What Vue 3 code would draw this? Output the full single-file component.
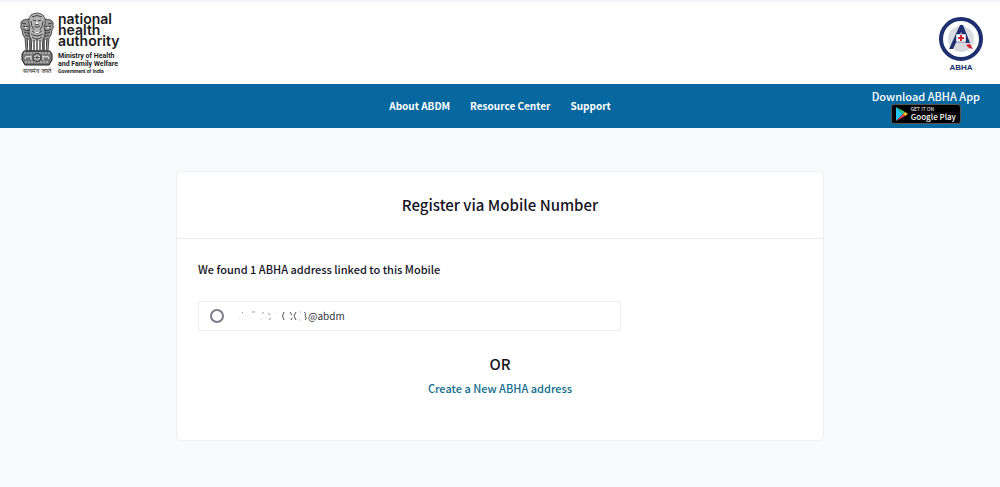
<template>
    <div class="page">
        <header class="header">
            <a class="nha" href="#">
                <span class="nha__emblem">
                    <svg class="nha__lions" viewBox="0 0 34 54" aria-hidden="true">
                        <g fill="#9a9a9a" stroke="#333" stroke-width="0.8">
                            <path d="M3 8q-3 2-2 5q-1 3 1 5q0 5 3 8l1 13h5l2-25l-4-7z" />
                            <path d="M31 8q3 2 2 5q1 3-1 5q0 5-3 8l-1 13h-5l-2-25l4-7z" />
                            <path d="M11 3q6-4 12 0q4 5 1 12q3 7-1 12l-1 12h-10l-1-12q-4-5-1-12q-3-7 1-12z" fill="#b4b4b4" />
                        </g>
                        <g fill="none" stroke="#222" stroke-width="0.8">
                            <path d="M12 5q5-3 10 0M13 8l3 1M18 9l3-1M15 12q2 2 4 0M14 14q3 3 6 0M11 9q0 5 3 9M23 9q0 5-3 9" />
                            <path d="M12 19q5 4 10 0M11 22q6 4 12 0M12 25q5 4 10 0M14 28v10M17 27v11M20 28v10" />
                            <path d="M2 11l4 1M3 14q3 2 6 0M3 17q3 3 7 1M4 20q3 2 6 1M5 23q3 2 5 1M7 26l1 12M10 26v12" />
                            <path d="M32 11l-4 1M31 14q-3 2-6 0M31 17q-3 3-7 1M30 20q-3 2-6 1M29 23q-3 2-5 1M27 26l-1 12M24 26v12" />
                        </g>
                        <g fill="#fff">
                            <path d="M16 10h2v2h-2zM15 20h4v1h-4zM15 29h1v9h-1zM18 29h1v9h-1zM8 28h1v10h-1zM12 30h1v8h-1zM21 30h1v8h-1zM25 28h1v10h-1zM5 15h2v1h-2zM27 15h2v1h-2z" />
                        </g>
                        <path d="M4 39h26l2 3v6l-3 5h-24l-3-5v-6z" fill="#777" stroke="#222" />
                        <path d="M4 41h26M5 50h24" stroke="#ddd" stroke-width="1" stroke-dasharray="2 1" />
                        <circle cx="17" cy="45.500" r="4" fill="#ddd" stroke="#222" />
                        <path d="M17 42v7M13.500 45.500h7M14.500 43l5 5M19.500 43l-5 5" stroke="#333" stroke-width="0.6" />
                        <path d="M5 47q1-4 3-2l3-1v4M29 47q-1-4-3-2l-3-1v4" fill="none" stroke="#ddd" stroke-width="1.2" />
                    </svg>
                    <span class="nha__motto">सत्यमेव जयते</span>
                </span>
                <span class="nha__text">
                    <span class="nha__name">national<br>health<br>authority</span>
                    <span class="nha__ministry">Ministry of Health<br>and Family Welfare</span>
                    <span class="nha__gov">Government of India</span>
                </span>
            </a>
            <a class="abha" href="#">
                <svg class="abha__icon" viewBox="0 0 46 46" aria-hidden="true">
                    <circle cx="23" cy="23" r="20" fill="#fff" stroke="#1d2f6f" stroke-width="4" />
                    <circle cx="23" cy="23" r="13" fill="#d9dbe0" />
                    <path d="M11 33L22 9h3l7 18h-4l-5-11l-8 17z" fill="#1d2f6f" />
                    <path d="M18 18h10v8h-10z" fill="#fff" stroke="#1d2f6f" stroke-width="0.5" />
                    <path d="M22 19h2v2h2v2h-2v2h-2v-2h-2v-2h2z" fill="#d5202f" />
                    <path d="M28 29l4-1l3 5l-4-1z" fill="#d5202f" />
                </svg>
                <span class="abha__label">ABHA</span>
            </a>
        </header>

        <nav class="nav">
            <div class="nav__links">
                <a v-for="link in links" :key="link" class="nav__link" href="#">{{ link }}</a>
            </div>
            <div class="download">
                <span class="download__title">Download ABHA App</span>
                <a class="play" href="#">
                    <svg class="play__icon" viewBox="0 0 12 14" aria-hidden="true">
                        <path d="M0 0v14l7-7z" fill="#20c4f4" />
                        <path d="M0 0l7 7l2-2z" fill="#35d07f" />
                        <path d="M0 14l7-7l2 2z" fill="#ef4256" />
                        <path d="M9 5l3 2l-3 2l-2-2z" fill="#fbc02d" />
                    </svg>
                    <span class="play__text">
                        <span class="play__small">GET IT ON</span>
                        <span class="play__big">Google Play</span>
                    </span>
                </a>
            </div>
        </nav>

        <main class="main">
            <section class="card">
                <h1 class="card__title">Register via Mobile Number</h1>
                <div class="card__body">
                    <p class="card__found">We found {{ count }} ABHA address linked to this Mobile</p>
                    <label class="address">
                        <input v-model="selected" class="address__radio" type="radio" name="address" value="abdm">
                        <span class="address__text">
                            <svg class="address__mask" viewBox="0 0 70 12" aria-hidden="true">
                                <g fill="none" stroke="#555">
                                    <path d="M46 2q-3 4 0 8M52 2l2 3M58 2l-2 4l2 4M53 10l1-2M66 2q3 1 1 4q3 2 0 4" />
                                    <path d="M4 3l1-1M14 2h3M25 2v2M31 3v2M31 10l2-2M62 2h1M61 10h1" stroke="#999" />
                                    <path d="M1 9h1M12 8h1M22 9h2M37 3h1" stroke="#ddd" />
                                </g>
                            </svg>@abdm
                        </span>
                    </label>
                    <p class="card__or">OR</p>
                    <a class="card__create" href="#">Create a New ABHA address</a>
                </div>
            </section>
        </main>
    </div>
</template>

<script setup>
import { ref } from 'vue'

const links = ['About ABDM', 'Resource Center', 'Support']
const count = ref(1)
const selected = ref(null)
</script>

<style>
body {
    background: #f8fafc;
}
</style>

<style scoped>
.page {
    font-family: "Noto Sans CJK SC", "Open Sans", sans-serif;
    color: #14141f;
}

a {
    text-decoration: none;
}

.header {
    display: flex;
    justify-content: space-between;
    align-items: flex-start;
    box-sizing: border-box;
    min-height: 84px;
    padding: 10px 16px 0 20px;
    border-top: 2px solid #f3f3fa;
    background: #fff;
}

.nha {
    display: flex;
    gap: 4px;
    color: #1c1c1c;
}

.nha__emblem {
    display: flex;
    flex-direction: column;
    align-items: center;
    width: 34px;
}

.nha__lions {
    width: 34px;
    height: 54px;
}

.nha__motto {
    font-size: 6px;
    line-height: 9px;
    white-space: nowrap;
}

.nha__text {
    display: flex;
    flex-direction: column;
    padding-top: 1px;
}

.nha__name {
    margin-bottom: 6px;
    font-family: Inter, sans-serif;
    font-size: 14px;
    font-weight: 600;
    line-height: 11px;
}

.nha__ministry {
    font-family: Roboto, sans-serif;
    font-size: 7px;
    font-weight: 700;
    line-height: 8px;
}

.nha__gov {
    font-family: Roboto, sans-serif;
    font-size: 5px;
    font-weight: 700;
    line-height: 7px;
}

.abha {
    display: flex;
    flex-direction: column;
    align-items: center;
    padding-top: 4px;
    color: #1d2f6f;
}

.abha__icon {
    width: 46px;
    height: 46px;
}

.abha__label {
    font-family: "Liberation Sans", sans-serif;
    font-size: 8px;
    font-weight: 700;
    line-height: 12px;
}

.nav {
    display: grid;
    grid-template-columns: 1fr auto 1fr;
    align-items: center;
    min-height: 44px;
    padding: 0 20px;
    background: #0768a0;
}

.nav__links {
    display: flex;
    grid-column: 2;
    gap: 20px;
}

.nav__link {
    color: #fff;
    font-size: 10px;
    font-weight: 700;
    line-height: 16px;
}

.download {
    display: flex;
    flex-direction: column;
    align-items: center;
    justify-self: end;
    color: #fff;
}

.download__title {
    font-size: 11px;
    font-weight: 500;
    line-height: 16px;
}

.play {
    display: flex;
    align-items: center;
    gap: 3px;
    box-sizing: border-box;
    height: 20px;
    padding: 0 4px;
    border: 1px solid #555;
    border-radius: 3px;
    background: #000;
    color: #fff;
}

.play__icon {
    width: 12px;
    height: 14px;
}

.play__text {
    display: flex;
    flex-direction: column;
}

.play__small {
    font-size: 5px;
    line-height: 6px;
}

.play__big {
    font-size: 8px;
    font-weight: 500;
    line-height: 10px;
}

.main {
    padding: 43px 24px;
}

.card {
    box-sizing: border-box;
    max-width: 648px;
    margin: 0 auto;
    border: 1px solid #edf0f3;
    border-radius: 6px;
    background: #fff;
}

.card__title {
    margin: 0;
    padding: 21px;
    border-bottom: 1px solid #e8eaed;
    font-size: 15px;
    font-weight: 500;
    line-height: 24px;
    text-align: center;
}

.card__body {
    display: flex;
    flex-direction: column;
    align-items: center;
    padding: 20px 21px 42px;
}

.card__found {
    align-self: stretch;
    margin: 0 0 22px;
    font-size: 11px;
    font-weight: 500;
    line-height: 20px;
}

.address {
    display: flex;
    align-items: center;
    align-self: flex-start;
    gap: 14px;
    box-sizing: border-box;
    width: 70%;
    min-height: 30px;
    padding: 0 11px;
    border: 1px solid #eceef0;
    border-radius: 2px;
}

.address__radio {
    appearance: none;
    box-sizing: border-box;
    width: 14px;
    height: 14px;
    margin: 0;
    border: 2px solid #7c7c8a;
    border-radius: 50%;
    background: #fff;
}

.address__radio:checked {
    background: #0768a0;
}

.address__text {
    display: flex;
    align-items: center;
    color: #33333d;
    font-size: 10px;
    line-height: 16px;
}

.address__mask {
    width: 70px;
    height: 12px;
}

.card__or {
    margin: 21px 0 2px;
    font-size: 15px;
    font-weight: 500;
    line-height: 24px;
}

.card__create {
    color: #0f6c8c;
    font-size: 11px;
    font-weight: 500;
    line-height: 20px;
}
</style>
